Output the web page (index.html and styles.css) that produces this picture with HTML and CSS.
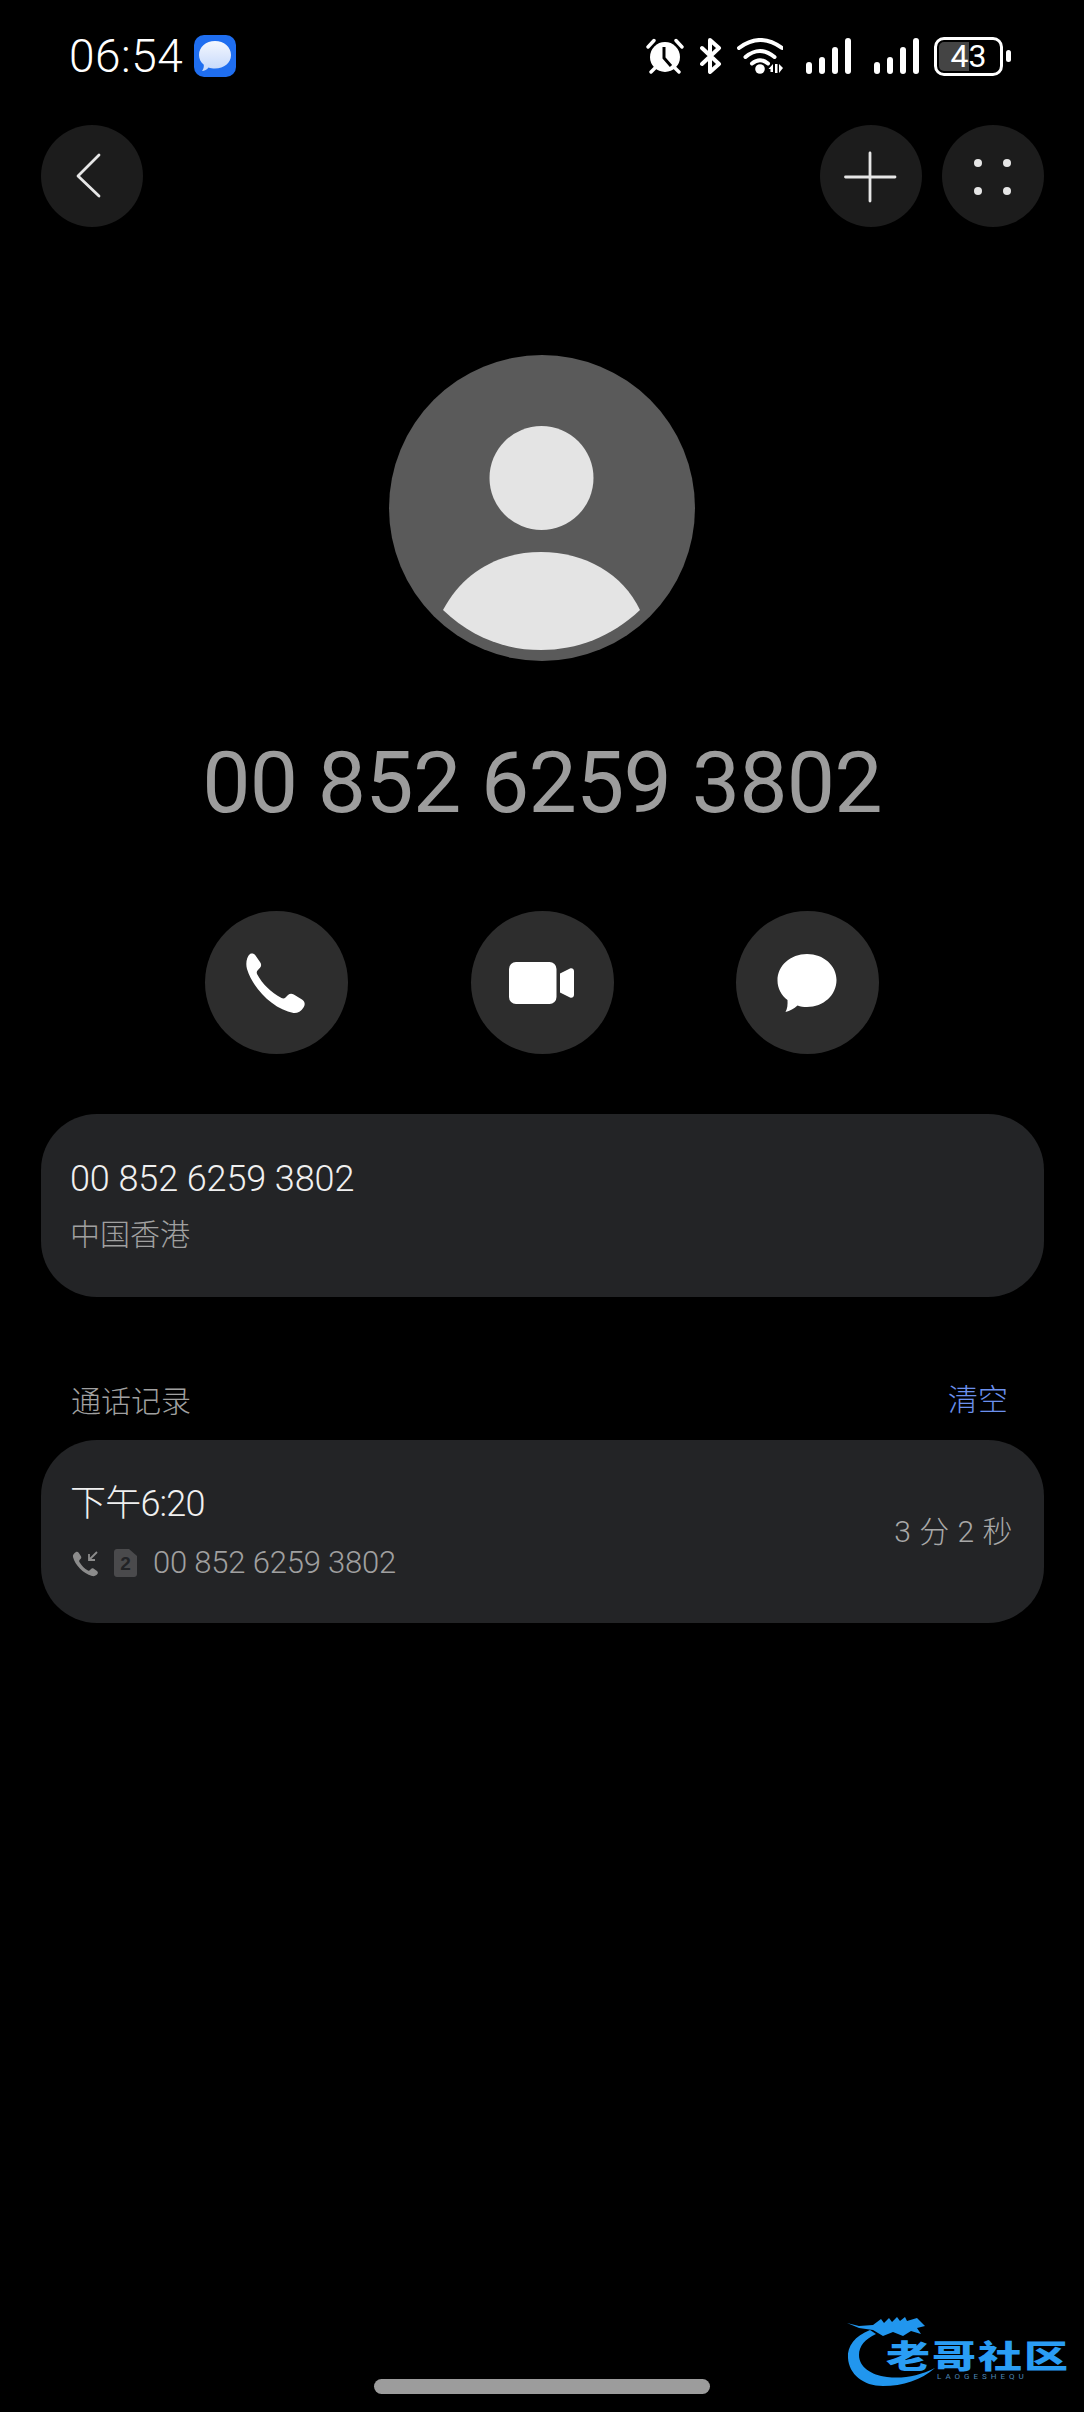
FILE: index.html
```html
<!DOCTYPE html>
<html lang="zh-CN">

<head>
    <meta charset="UTF-8">
    <meta name="viewport" content="width=device-width, initial-scale=1.0">
    <title>通话详情</title>
    <link rel="stylesheet" href="styles.css">
</head>

<body>
    <div class="screen">
        <div class="status-bar">
            <div class="status-left">
                <span class="clock">06:54</span>
                <svg class="app-icon" width="42" height="42" viewBox="0 0 42 42">
                    <defs>
                        <linearGradient id="bubbleFill" x1="0" y1="0" x2="0" y2="1">
                            <stop offset="0" stop-color="#f4f7fe" />
                            <stop offset="1" stop-color="#c4d8fb" />
                        </linearGradient>
                    </defs>
                    <rect width="42" height="42" rx="10" fill="#1f6ef0" />
                    <path d="M21 6C30 6 37 12 37 20C37 28 30 33.500 21 33.500C18.500 33.500 16.500 33.200 14.500 32.500C13 34.500 10.500 36 8 36C9.500 34 10 32 9.800 29.800C6.800 27.300 5 24 5 20C5 12 12 6 21 6Z" fill="url(#bubbleFill)" />
                </svg>
            </div>
            <div class="status-right">
                <svg class="st-alarm" width="38" height="36" viewBox="0 0 38 36">
                    <path d="M2 9L8 2.500M36 9L30 2.500M5 34L9 30M33 34L29 30" stroke="#fff" stroke-width="3.400" stroke-linecap="round" fill="none" />
                    <circle cx="19" cy="19" r="15" fill="#fff" />
                    <path d="M18 9V20L25 28" stroke="#000" stroke-width="3" fill="none" />
                </svg>
                <svg class="st-bt" width="22" height="36" viewBox="0 0 22 36">
                    <path d="M2 10L19 26L10 34V2L19 10L2 26" stroke="#fff" stroke-width="4" stroke-linecap="round" stroke-linejoin="round" fill="none" />
                </svg>
                <svg class="st-wifi" width="46" height="36" viewBox="0 0 46 36">
                    <path d="M2 10Q23 -6 45 10M8.500 19Q23 7 37.500 19M15 25.500Q23 19 31 25.500" stroke="#fff" stroke-width="4" stroke-linecap="round" fill="none" />
                    <circle cx="23" cy="31" r="4.800" fill="#fff" />
                    <path d="M36 26V34H33.500V31H31.500ZM38 26H40.500V35H38ZM42 26L46 30L42 35Z" fill="#fff" />
                </svg>
                <div class="signal">
                    <span class="bar h1"></span><span class="bar h2"></span><span class="bar h3"></span><span class="bar h4"></span>
                </div>
                <div class="signal">
                    <span class="bar h1"></span><span class="bar h2"></span><span class="bar h3"></span><span class="bar h4"></span>
                </div>
                <div class="battery">
                    <div class="battery-body">
                        <span class="battery-level"></span>
                        <span class="battery-text">43</span>
                    </div>
                    <span class="battery-nub"></span>
                </div>
            </div>
        </div>

        <div class="toolbar">
            <button class="round-btn">
                <svg width="102" height="102" viewBox="0 0 102 102">
                    <path d="M58 30L37 51L58 71" stroke="#e6e6e6" stroke-width="2.800" stroke-linecap="round" stroke-linejoin="round" fill="none" />
                </svg>
            </button>
            <div class="toolbar-right">
                <button class="round-btn">
                    <svg width="102" height="102" viewBox="0 0 102 102">
                        <path d="M25.500 52H75M50 28V76" stroke="#e6e6e6" stroke-width="2.800" stroke-linecap="round" fill="none" />
                    </svg>
                </button>
                <button class="round-btn">
                    <svg width="102" height="102" viewBox="0 0 102 102" fill="#e6e6e6">
                        <circle cx="36" cy="38" r="4" />
                        <circle cx="65" cy="38" r="4" />
                        <circle cx="36" cy="66" r="4" />
                        <circle cx="65" cy="66" r="4" />
                    </svg>
                </button>
            </div>
        </div>

        <svg class="avatar" width="306" height="306" viewBox="0 0 306 306">
            <circle cx="153" cy="153" r="153" fill="#5a5a5a" />
            <circle cx="152.500" cy="123" r="52" fill="#e4e4e4" />
            <path d="M54 255C74 217 110 197 152 197C196 197 234 219 251 255C222 282 188 295 152 295C116 295 82 282 54 255Z" fill="#e4e4e4" />
        </svg>

        <h1 class="caller">00 852 6259 3802</h1>

        <div class="actions">
            <button class="action-btn">
                <svg width="143" height="143" viewBox="0 0 143 143">
                    <path d="M45 43C47 42 49 42.500 50.500 44.500L55 51C56.500 53 56.500 55 55 56.800L52.500 59.500C51.500 60.800 51.500 62 52.300 63.500C57 72.500 66 81.500 76.500 87C78 87.700 79.500 87.500 80.500 86.500L83 84C84.800 82.300 86.800 82.300 88.800 83.500L97 88.500C100 90.500 100.500 93.500 98.500 96.500C96 100.500 92 102.500 88.500 102C69 98.500 48 78 42 58C40.500 52.500 41.500 46 45 43Z" fill="#fff" />
                </svg>
            </button>
            <button class="action-btn">
                <svg width="143" height="143" viewBox="0 0 143 143" fill="#fff">
                    <rect x="38" y="51" width="47.500" height="42" rx="7" />
                    <path d="M89 62.500L99 57.500C101 56.700 103 58 103 60V84C103 86 101 87.300 99 86.500L89 81.500Z" />
                </svg>
            </button>
            <button class="action-btn">
                <svg width="143" height="143" viewBox="0 0 143 143">
                    <path d="M71 43C87.500 43 100.500 54.500 100.500 69C100.500 84 87.500 96 71 96C67.500 96 64.500 95.500 61.500 94.500C58 97.500 54 100 49.500 101C51.500 97.500 51.700 93.500 51.500 89C45.500 84.500 41.500 77.500 41.500 69.500C41.500 54.500 54.500 43 71 43Z" fill="#fff" />
                </svg>
            </button>
        </div>

        <div class="card">
            <div class="card-title">00 852 6259 3802</div>
            <div class="card-sub">中国香港</div>
        </div>

        <div class="section-head">
            <span class="section-title">通话记录</span>
            <span class="section-link">清空</span>
        </div>

        <div class="card card-log">
            <div>
                <div class="card-title">下午6:20</div>
                <div class="log-line">
                    <svg width="28" height="28" viewBox="0 0 28 28">
                        <path d="M5 3C6 2.500 7 2.800 7.700 3.800L9.800 7C10.500 8 10.400 9 9.700 9.800L8.500 11C8 11.600 8 12.200 8.400 12.900C10.500 16.500 13.500 19.500 17 21.500C17.700 21.900 18.300 21.800 18.800 21.300L20 20C20.800 19.200 21.800 19.200 22.800 19.800L26 22C27 22.800 27.200 24 26.400 25C25 26.800 23 27.500 21 27C12 24.500 4 16 2 8C1.500 6 3 4 5 3Z" fill="#8c8c8c" />
                        <path d="M26 3L18 11M18 5V11H24" stroke="#8c8c8c" stroke-width="1.800" fill="none" />
                    </svg>
                    <svg class="sim" width="23" height="28" viewBox="0 0 23 28">
                        <path d="M3 0H15L23 7V25C23 26.700 21.700 28 20 28H3C1.300 28 0 26.700 0 25V3C0 1.300 1.300 0 3 0Z" fill="#4a4a4c" />
                        <text x="11.500" y="21" class="sim-num">2</text>
                    </svg>
                    <span class="log-number">00 852 6259 3802</span>
                </div>
            </div>
            <span class="duration">3 分 2 秒</span>
        </div>

        <div class="home-bar"></div>

        <div class="watermark">
            <svg width="110" height="75" viewBox="0 0 110 75">
                <path d="M25 18C10 24 2 34 3 46C4 62 18 74 38 74C58 74 76 68 90 56C74 64 58 67 42 65C26 63 14 55 14 43C14 34 20 27 31 22Z" fill="#2196ee" />
                <path d="M2 11L14 14L28 13L36 7L39 11L44 6L47 10L52 5L55 9L60 5L62 9L72 6L80 14L72 16L76 22L66 19L58 24L48 20L38 24L28 18L14 16Z" fill="#2196ee" />
            </svg>
            <span class="wm-title">老哥社区</span>
            <span class="wm-sub">LAOGESHEQU</span>
        </div>
    </div>
</body>

</html>
```

FILE: styles.css
```css
* {
    box-sizing: border-box;
}

body {
    margin: 0;
    background-color: #000;
    font-family: Roboto, "Noto Sans CJK SC", sans-serif;
}

.screen {
    position: relative;
    width: 1084px;
    height: 2412px;
    display: flex;
    flex-direction: column;
    overflow: hidden;
}

/* status bar */
.status-bar {
    height: 125px;
    padding: 35px 73px 0 69px;
    display: flex;
    justify-content: space-between;
    align-items: flex-start;
}

.status-left {
    display: flex;
    align-items: center;
    gap: 11px;
    height: 42px;
}

.clock {
    font-size: 46px;
    font-weight: 300;
    letter-spacing: 0.5px;
    color: #fff;
    line-height: 42px;
}

.status-right {
    display: flex;
    align-items: center;
    height: 42px;
}

.st-bt {
    margin-left: 16px;
}

.st-wifi {
    margin-left: 15px;
}

.signal {
    display: flex;
    align-items: flex-end;
    gap: 7px;
    height: 36px;
    margin-left: 23px;
}

.bar {
    width: 6px;
    background-color: #fff;
    border-radius: 3px;
}

.h1 {
    height: 12px;
}

.h2 {
    height: 17px;
}

.h3 {
    height: 27px;
}

.h4 {
    height: 36px;
}

.battery {
    display: flex;
    align-items: center;
    gap: 3px;
    margin-left: 15px;
}

.battery-body {
    position: relative;
    width: 69px;
    height: 39px;
    border: 3px solid #fff;
    border-radius: 10px;
    overflow: hidden;
    display: flex;
    align-items: center;
    justify-content: center;
}

.battery-level {
    position: absolute;
    left: 2px;
    top: 2px;
    bottom: 2px;
    width: 30px;
    background-color: #444;
    border-radius: 5px 0 0 5px;
}

.battery-text {
    position: relative;
    font-size: 32px;
    color: #fff;
    line-height: 34px;
}

.battery-nub {
    width: 5px;
    height: 12px;
    border-radius: 3px;
    background-color: #fff;
}

/* toolbar */
.toolbar {
    display: flex;
    justify-content: space-between;
    padding: 0 40px 0 41px;
}

.toolbar-right {
    display: flex;
    gap: 20px;
}

.round-btn {
    width: 102px;
    height: 102px;
    padding: 0;
    border: 0;
    border-radius: 50%;
    background-color: #1c1c1c;
}

.round-btn svg,
.action-btn svg {
    display: block;
}

/* header */
.avatar {
    display: block;
    margin: 128px auto 0;
}

.caller {
    margin: 72px 0 0;
    text-align: center;
    font-size: 86px;
    font-weight: 400;
    letter-spacing: -0.8px;
    line-height: 100px;
    color: #9c9c9c;
}

.actions {
    display: flex;
    justify-content: center;
    gap: 122.5px;
    margin-top: 78px;
}

.action-btn {
    width: 143px;
    height: 143px;
    padding: 0;
    border: 0;
    border-radius: 50%;
    background-color: #2d2d2d;
}

/* cards */
.card {
    margin: 60px 40px 0 41px;
    height: 183px;
    padding: 44px 29px 0;
    border-radius: 56px;
    background-color: #232426;
}

.card-title {
    font-size: 36px;
    font-weight: 300;
    letter-spacing: -0.1px;
    line-height: 42px;
    color: #f0f0f0;
}

.card-sub {
    margin-top: 14px;
    font-size: 30px;
    font-weight: 300;
    line-height: 42px;
    color: #a0a0a0;
}

.section-head {
    display: flex;
    justify-content: space-between;
    margin-top: 84px;
    padding: 0 76px 0 71px;
    line-height: 42px;
    font-size: 30px;
    font-weight: 300;
}

.section-title {
    color: #a0a0a0;
}

.section-link {
    margin-top: -2px;
    color: #6b90ee;
}

.card-log {
    margin-top: 17px;
    display: flex;
    align-items: center;
    justify-content: space-between;
    padding: 3px 31px 0 30px;
}

.card-log .card-title {
    margin-left: -1px;
    letter-spacing: -0.8px;
}

.log-line {
    display: flex;
    align-items: center;
    gap: 15px;
    margin-top: 17px;
    height: 42px;
}

.sim {
    margin-right: 1px;
}

.sim-num {
    font-family: "Liberation Sans", sans-serif;
    font-size: 19px;
    font-weight: 700;
    text-anchor: middle;
    fill: #222326;
}

.log-number {
    font-size: 31px;
    font-weight: 300;
    letter-spacing: -0.2px;
    color: #a0a0a0;
}

.duration {
    margin-bottom: 9px;
    font-size: 30px;
    font-weight: 300;
    letter-spacing: 0.5px;
    color: #a8a8a8;
}

.home-bar {
    width: 336px;
    height: 15px;
    margin: auto 0 18px 374px;
    border-radius: 8px;
    background-color: #9c9c9c;
}

/* watermark over the bottom corner */
.watermark {
    position: absolute;
    left: 845px;
    top: 2312px;
    width: 225px;
    height: 75px;
}

.watermark svg {
    position: absolute;
    left: 0;
    top: 0;
}

.wm-title {
    position: absolute;
    left: 41px;
    top: 20px;
    font-family: "Noto Sans CJK SC", sans-serif;
    font-size: 44px;
    font-weight: 900;
    letter-spacing: 2px;
    line-height: 44px;
    color: #2a9df4;
    white-space: nowrap;
    transform: scaleY(0.72);
}

.wm-sub {
    position: absolute;
    left: 92px;
    top: 60px;
    font-size: 8px;
    letter-spacing: 4px;
    color: #4b86b5;
    white-space: nowrap;
}
```
